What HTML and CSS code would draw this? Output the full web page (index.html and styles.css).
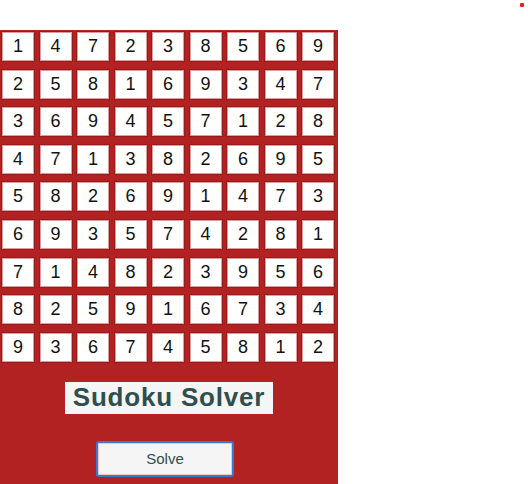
FILE: index.html
```html
<!DOCTYPE html>
<html>
<head>
<meta charset="utf-8">
<link rel="stylesheet" href="styles.css">
</head>
<body>
<span class="dot"></span>
<div class="board">
  <div class="grid">
    <div class="cell">1</div><div class="cell">4</div><div class="cell">7</div><div class="cell">2</div><div class="cell">3</div><div class="cell">8</div><div class="cell">5</div><div class="cell">6</div><div class="cell">9</div>
    <div class="cell">2</div><div class="cell">5</div><div class="cell">8</div><div class="cell">1</div><div class="cell">6</div><div class="cell">9</div><div class="cell">3</div><div class="cell">4</div><div class="cell">7</div>
    <div class="cell">3</div><div class="cell">6</div><div class="cell">9</div><div class="cell">4</div><div class="cell">5</div><div class="cell">7</div><div class="cell">1</div><div class="cell">2</div><div class="cell">8</div>
    <div class="cell">4</div><div class="cell">7</div><div class="cell">1</div><div class="cell">3</div><div class="cell">8</div><div class="cell">2</div><div class="cell">6</div><div class="cell">9</div><div class="cell">5</div>
    <div class="cell">5</div><div class="cell">8</div><div class="cell">2</div><div class="cell">6</div><div class="cell">9</div><div class="cell">1</div><div class="cell">4</div><div class="cell">7</div><div class="cell">3</div>
    <div class="cell">6</div><div class="cell">9</div><div class="cell">3</div><div class="cell">5</div><div class="cell">7</div><div class="cell">4</div><div class="cell">2</div><div class="cell">8</div><div class="cell">1</div>
    <div class="cell">7</div><div class="cell">1</div><div class="cell">4</div><div class="cell">8</div><div class="cell">2</div><div class="cell">3</div><div class="cell">9</div><div class="cell">5</div><div class="cell">6</div>
    <div class="cell">8</div><div class="cell">2</div><div class="cell">5</div><div class="cell">9</div><div class="cell">1</div><div class="cell">6</div><div class="cell">7</div><div class="cell">3</div><div class="cell">4</div>
    <div class="cell">9</div><div class="cell">3</div><div class="cell">6</div><div class="cell">7</div><div class="cell">4</div><div class="cell">5</div><div class="cell">8</div><div class="cell">1</div><div class="cell">2</div>
  </div>
  <h1 class="title">Sudoku Solver</h1>
  <button class="solve">Solve</button>
</div>
</body>
</html>
```
FILE: styles.css
```css
html, body {
  margin: 0;
  padding: 0;
  background: #ffffff;
  font-family: "Liberation Sans", Arial, sans-serif;
  overflow: hidden;
}
body {
  position: relative;
  height: 484px;
  padding-top: 30px;
  box-sizing: border-box;
}
.dot {
  position: absolute;
  left: 520px;
  top: 3px;
  width: 4px;
  height: 4px;
  background: #e52222;
  border-radius: 1px;
}
.board {
  width: 338px;
  height: 454px;
  background: #b22222;
  display: flex;
  flex-direction: column;
  align-items: center;
}
.grid {
  display: grid;
  grid-template-columns: repeat(9, 34px);
  grid-auto-rows: 31px;
  column-gap: 3.5px;
  row-gap: 6.6px;
  padding: 1px 0 0 1px;
  align-self: flex-start;
}
.cell {
  box-sizing: border-box;
  background: #ffffff;
  border: 1px solid #961c1c;
  box-shadow: inset 0 0 0 1px #de9c9c;
  display: flex;
  align-items: center;
  justify-content: center;
  font-size: 18px;
  color: #111111;
}
.title {
  margin: 19px 0 0 0;
  padding: 1px 8px 2px;
  background: #f5f5f5;
  color: #2f4f4f;
  font-size: 26px;
  font-weight: bold;
  line-height: 29px;
  letter-spacing: 0.8px;
}
.solve {
  margin: 27px 8px 0 0;
  width: 138px;
  height: 36px;
  background: #f5f5f5;
  color: #2f4f4f;
  font-family: "Liberation Sans", Arial, sans-serif;
  font-size: 15px;
  border: 2px solid #3a78c8;
  box-shadow: inset 0 0 0 1px #f0c8c8;
  border-radius: 3px;
}
```
